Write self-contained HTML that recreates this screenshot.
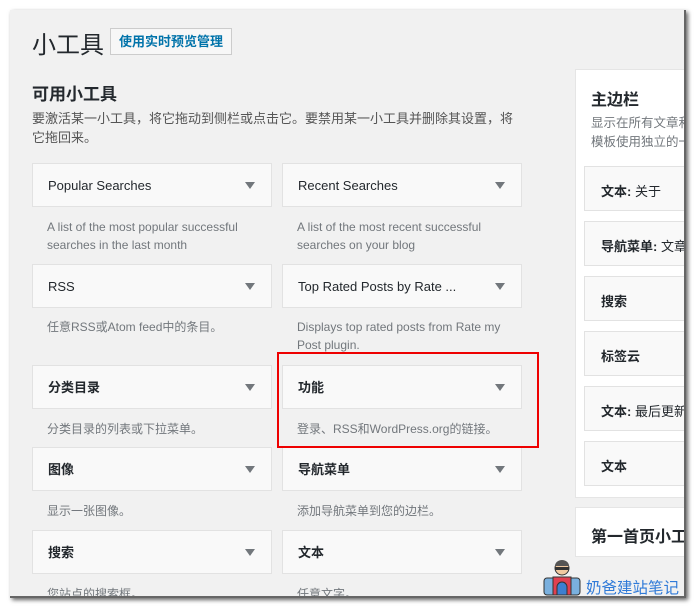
<!DOCTYPE html>
<html><head><meta charset="utf-8"><style>
*{margin:0;padding:0;box-sizing:border-box}
body{width:697px;height:610px;background:#fff;position:relative;overflow:hidden;font-family:"Liberation Sans","Noto Sans CJK SC",sans-serif;color:#23282d}
#p{position:absolute;left:10px;top:10px;width:676px;height:588px;background:#f1f1f1;overflow:hidden;box-shadow:2px 2px 4px rgba(0,0,0,.6);border-right:2px solid #666;border-bottom:2px solid #666}
.a{position:absolute}
.w{position:absolute;width:240px;height:44px;background:#f9f9f9;border:1px solid #e2e2e2;font-size:13px;font-weight:400;padding:14px 15px;line-height:16px}
.w.c{font-weight:600}
.w i{position:absolute;right:16px;top:18px;width:0;height:0;border-left:5px solid transparent;border-right:5px solid transparent;border-top:7px solid #72777c}
.d{position:absolute;font-size:12px;color:#72777c;line-height:18px;width:220px}
.s{position:absolute;left:574px;width:110px;height:45px;background:#f9f9f9;border:1px solid #e2e2e2;font-size:13px;font-weight:600;padding:14px 16px;white-space:nowrap;overflow:hidden}
</style></head><body>
<div id="p">
<div class="a" style="left:22px;top:15px;font-size:24px;font-weight:400;color:#23282d">小工具</div>
<div class="a" style="left:100px;top:18px;height:27px;padding:0 8px;border:1px solid #ccc;background:#f7f7f7;font-size:13px;font-weight:600;color:#0073aa;line-height:25px">使用实时预览管理</div>
<div class="a" style="left:22px;top:70px;font-size:17px;font-weight:700">可用小工具</div>
<div class="a" style="left:22px;top:99px;font-size:13px;color:#555;line-height:19px;width:488px">要激活某一小工具，将它拖动到侧栏或点击它。要禁用某一小工具并删除其设置，将它拖回来。</div>

<div class="w" style="left:22px;top:153px">Popular Searches<i></i></div>
<div class="w" style="left:272px;top:153px">Recent Searches<i></i></div>
<div class="d" style="left:37px;top:208px">A list of the most popular successful searches in the last month</div>
<div class="d" style="left:287px;top:208px">A list of the most recent successful searches on your blog</div>

<div class="w" style="left:22px;top:254px">RSS<i></i></div>
<div class="w" style="left:272px;top:254px">Top Rated Posts by Rate ...<i></i></div>
<div class="d" style="left:37px;top:308px">任意RSS或Atom feed中的条目。</div>
<div class="d" style="left:287px;top:308px">Displays top rated posts from Rate my Post plugin.</div>

<div class="w c" style="left:22px;top:355px">分类目录<i></i></div>
<div class="w c" style="left:272px;top:355px">功能<i></i></div>
<div class="d" style="left:37px;top:410px">分类目录的列表或下拉菜单。</div>
<div class="d" style="left:287px;top:410px;width:240px">登录、RSS和WordPress.org的链接。</div>

<div class="w c" style="left:22px;top:437px">图像<i></i></div>
<div class="w c" style="left:272px;top:437px">导航菜单<i></i></div>
<div class="d" style="left:37px;top:492px">显示一张图像。</div>
<div class="d" style="left:287px;top:492px">添加导航菜单到您的边栏。</div>

<div class="w c" style="left:22px;top:520px">搜索<i></i></div>
<div class="w c" style="left:272px;top:520px">文本<i></i></div>
<div class="d" style="left:37px;top:575px">您站点的搜索框。</div>
<div class="d" style="left:287px;top:575px">任意文字。</div>

<div class="a" style="left:565px;top:59px;width:120px;height:429px;background:#fff;border:1px solid #e5e5e5"></div>
<div class="a" style="left:581px;top:76px;font-size:16px;font-weight:700">主边栏</div>
<div class="a" style="left:581px;top:104px;font-size:12.5px;color:#72777c;line-height:19px;white-space:nowrap">显示在所有文章和页面的侧边栏<br>模板使用独立的一个</div>
<div class="s" style="top:156px">文本: <span style="font-weight:400">关于</span></div>
<div class="s" style="top:211px">导航菜单: <span style="font-weight:400">文章分类</span></div>
<div class="s" style="top:266px">搜索</div>
<div class="s" style="top:321px">标签云</div>
<div class="s" style="top:376px">文本: <span style="font-weight:400">最后更新</span></div>
<div class="s" style="top:431px">文本</div>
<div class="a" style="left:565px;top:497px;width:120px;height:50px;background:#fff;border:1px solid #e5e5e5;font-size:16px;font-weight:700;padding:15px 15px;white-space:nowrap;overflow:hidden">第一首页小工具</div>

<div class="a" style="left:267px;top:342px;width:262px;height:96px;border:2px solid #e00"></div>
</div>
<svg class="a" style="left:543px;top:558px" width="40" height="38" viewBox="0 0 40 38">
<rect x="1" y="20" width="36" height="17" rx="3" fill="#7ab0de" stroke="#333"/>
<rect x="10" y="19" width="18" height="18" fill="#e04050" stroke="#333"/>
<path d="M14 37 v-8 a5 5 0 0 1 10 0 v8z" fill="#3d7fd0" stroke="#333"/>
<circle cx="19" cy="10" r="7" fill="#f1c9a0" stroke="#333"/>
<path d="M12 8 a7 6 0 0 1 14 0z" fill="#555"/>
<rect x="12" y="9" width="14" height="3" fill="#333"/>
</svg>
<div class="a" style="left:586px;top:576px;font-size:15.5px;color:#2f7ad8">奶爸建站笔记</div>
</body></html>
